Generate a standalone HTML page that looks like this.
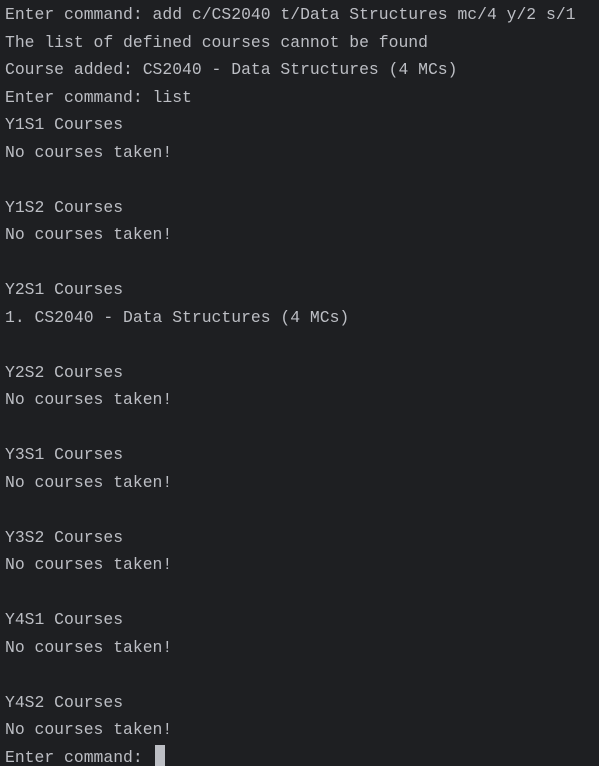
<!DOCTYPE html>
<html><head><meta charset="utf-8"><style>
html,body{margin:0;padding:0;background:#1e1f22;width:599px;height:766px;overflow:hidden}
pre{margin:0;padding:1px 0 0 5px;font-family:"Liberation Mono",monospace;font-size:16.4px;line-height:27.5px;color:#bcbec4;white-space:pre}
.cur{display:inline-block;width:10px;height:23px;background:#bcbec4;vertical-align:-6px;margin-left:2px}
</style></head><body><pre>Enter command: add c/CS2040 t/Data Structures mc/4 y/2 s/1
The list of defined courses cannot be found
Course added: CS2040 - Data Structures (4 MCs)
Enter command: list
Y1S1 Courses
No courses taken!

Y1S2 Courses
No courses taken!

Y2S1 Courses
1. CS2040 - Data Structures (4 MCs)

Y2S2 Courses
No courses taken!

Y3S1 Courses
No courses taken!

Y3S2 Courses
No courses taken!

Y4S1 Courses
No courses taken!

Y4S2 Courses
No courses taken!
Enter command: <span class="cur"></span></pre></body></html>
